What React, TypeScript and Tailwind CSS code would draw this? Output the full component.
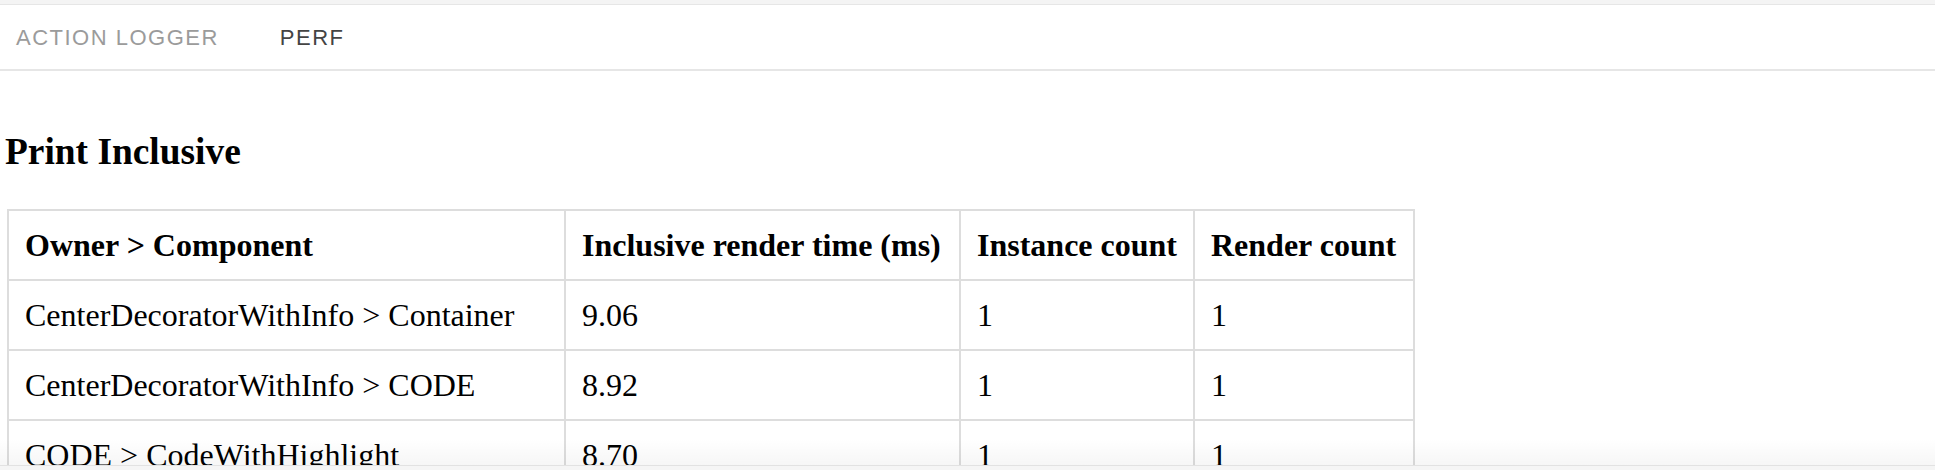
import React from "react";

const rows: [string, string, string, string][] = [
  ["CenterDecoratorWithInfo > Container", "9.06", "1", "1"],
  ["CenterDecoratorWithInfo > CODE", "8.92", "1", "1"],
  ["CODE > CodeWithHighlight", "8.70", "1", "1"],
];

export default function App() {
  return (
    <div
      className="flex h-[470px] flex-col overflow-hidden bg-white text-black"
      style={{ fontFamily: '"Liberation Serif", "Times New Roman", serif' }}
    >
      <div className="h-[4px] shrink-0 bg-[#f4f4f4]" />
      <div
        className="flex h-[67px] shrink-0 items-center gap-[61px] border-t border-b-2 border-[#e6e6e6] pl-[16px] text-[22px] tracking-[1.5px]"
        style={{ fontFamily: '"Liberation Sans", Arial, sans-serif' }}
      >
        <span className="text-[#9b9b9b]">ACTION LOGGER</span>
        <span className="text-[#444444]">PERF</span>
      </div>

      <div className="relative min-h-0 flex-1 overflow-hidden pl-[5px] pt-[59px]">
        <h3 className="text-[37.4px] font-bold leading-[43px]">Print Inclusive</h3>
        <div className="mt-[36px] pl-[2px]">
          <table className="table-fixed border-separate border-spacing-0 border-l-2 border-t-2 border-[#dddddd] text-[32px] leading-[36px]">
            <thead>
              <tr>
                <th className="w-[557px] border-b-2 border-r-2 border-[#dddddd] p-[16px] text-left font-bold">
                  Owner &gt; Component
                </th>
                <th className="w-[395px] border-b-2 border-r-2 border-[#dddddd] p-[16px] text-left font-bold">
                  Inclusive render time (ms)
                </th>
                <th className="w-[234px] border-b-2 border-r-2 border-[#dddddd] p-[16px] text-left font-bold">
                  Instance count
                </th>
                <th className="w-[220px] border-b-2 border-r-2 border-[#dddddd] p-[16px] text-left font-bold">
                  Render count
                </th>
              </tr>
            </thead>
            <tbody>
              {rows.map((r, i) => (
                <tr key={i}>
                  {r.map((c, j) => (
                    <td key={j} className="border-b-2 border-r-2 border-[#dddddd] p-[16px] text-left font-normal">
                      {c}
                    </td>
                  ))}
                </tr>
              ))}
            </tbody>
          </table>
        </div>
        <div className="pointer-events-none absolute bottom-0 left-0 right-0 h-[26px] bg-gradient-to-b from-transparent to-[rgba(0,0,0,0.035)]" />
      </div>

      <div className="h-[5px] shrink-0 border-t border-[#e2e2e2] bg-[#f5f5f5]" />
    </div>
  );
}
